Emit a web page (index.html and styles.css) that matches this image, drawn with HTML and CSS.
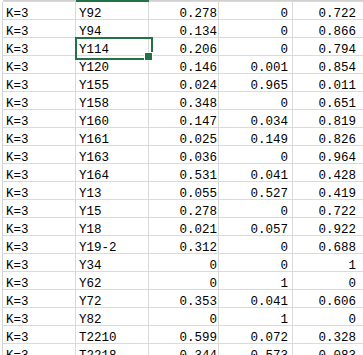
FILE: index.html
```html
<!DOCTYPE html>
<html>
<head>
<meta charset="utf-8">
<link rel="stylesheet" href="styles.css">
</head>
<body>
<div class="sheet">
  <div class="header">
    <div class="hcell"></div>
    <div class="hcell active"></div>
    <div class="hcell"></div>
    <div class="hcell"></div>
    <div class="hcell"></div>
  </div>
  <div class="grid">
    <div class="c">K=3</div><div class="c">Y92</div><div class="c n">0.278</div><div class="c n">0</div><div class="c n">0.722</div>
    <div class="c">K=3</div><div class="c">Y94</div><div class="c n">0.134</div><div class="c n">0</div><div class="c n">0.866</div>
    <div class="c">K=3</div><div class="c sel">Y114</div><div class="c n">0.206</div><div class="c n">0</div><div class="c n">0.794</div>
    <div class="c">K=3</div><div class="c">Y120</div><div class="c n">0.146</div><div class="c n">0.001</div><div class="c n">0.854</div>
    <div class="c">K=3</div><div class="c">Y155</div><div class="c n">0.024</div><div class="c n">0.965</div><div class="c n">0.011</div>
    <div class="c">K=3</div><div class="c">Y158</div><div class="c n">0.348</div><div class="c n">0</div><div class="c n">0.651</div>
    <div class="c">K=3</div><div class="c">Y160</div><div class="c n">0.147</div><div class="c n">0.034</div><div class="c n">0.819</div>
    <div class="c">K=3</div><div class="c">Y161</div><div class="c n">0.025</div><div class="c n">0.149</div><div class="c n">0.826</div>
    <div class="c">K=3</div><div class="c">Y163</div><div class="c n">0.036</div><div class="c n">0</div><div class="c n">0.964</div>
    <div class="c">K=3</div><div class="c">Y164</div><div class="c n">0.531</div><div class="c n">0.041</div><div class="c n">0.428</div>
    <div class="c">K=3</div><div class="c">Y13</div><div class="c n">0.055</div><div class="c n">0.527</div><div class="c n">0.419</div>
    <div class="c">K=3</div><div class="c">Y15</div><div class="c n">0.278</div><div class="c n">0</div><div class="c n">0.722</div>
    <div class="c">K=3</div><div class="c">Y18</div><div class="c n">0.021</div><div class="c n">0.057</div><div class="c n">0.922</div>
    <div class="c">K=3</div><div class="c">Y19-2</div><div class="c n">0.312</div><div class="c n">0</div><div class="c n">0.688</div>
    <div class="c">K=3</div><div class="c">Y34</div><div class="c n">0</div><div class="c n">0</div><div class="c n">1</div>
    <div class="c">K=3</div><div class="c">Y62</div><div class="c n">0</div><div class="c n">1</div><div class="c n">0</div>
    <div class="c">K=3</div><div class="c">Y72</div><div class="c n">0.353</div><div class="c n">0.041</div><div class="c n">0.606</div>
    <div class="c">K=3</div><div class="c">Y82</div><div class="c n">0</div><div class="c n">1</div><div class="c n">0</div>
    <div class="c">K=3</div><div class="c">T2210</div><div class="c n">0.599</div><div class="c n">0.072</div><div class="c n">0.328</div>
    <div class="c">K=3</div><div class="c">T2218</div><div class="c n">0.344</div><div class="c n">0.573</div><div class="c n">0.083</div>
  </div>
</div>
</body>
</html>
```
FILE: styles.css
```css
* { box-sizing: border-box; }
html, body { margin: 0; padding: 0; background: #fff; overflow: hidden; }
body { width: 363px; height: 355px; }
.sheet {
  width: 400px;
  padding-left: 2px;
  font-family: "Liberation Mono", monospace;
  font-size: 12.5px;
  color: #000;
}
.header {
  display: grid;
  grid-template-columns: 73px 73px 70px 74px 74px;
  margin-left: 1px;
  height: 2px;
}
.hcell {
  background: #d0d0d0;
  border-bottom: 1px solid #dadada;
}
.hcell.active { background: #217346; border-bottom: 1px solid #217346; }
.grid {
  display: grid;
  grid-template-columns: 73px 73px 70px 74px 74px;
  grid-auto-rows: 18px;
  border-left: 1px solid #d4d4d4;
}
.c {
  border-right: 1px solid #dadada;
  border-bottom: 1px solid #dadada;
  line-height: 17px;
  padding: 3.5px 3px 0 3px;
  white-space: nowrap;
  overflow: visible;
}
.n { text-align: right; }
.c:nth-child(5n+3) { padding-right: 1px; }
.c:nth-child(5n+4) { padding-right: 4px; }
.c:nth-child(5n) { padding-right: 10px; }
.sel { position: relative; }
.sel::before {
  content: "";
  position: absolute;
  left: -1px;
  top: -1px;
  width: 74px;
  height: 19px;
  border: 2px solid #217346;
}
.sel::after {
  content: "";
  position: absolute;
  left: 68px;
  top: 14px;
  width: 7px;
  height: 7px;
  background: #217346;
  border: 1px solid #fff;
}
```
